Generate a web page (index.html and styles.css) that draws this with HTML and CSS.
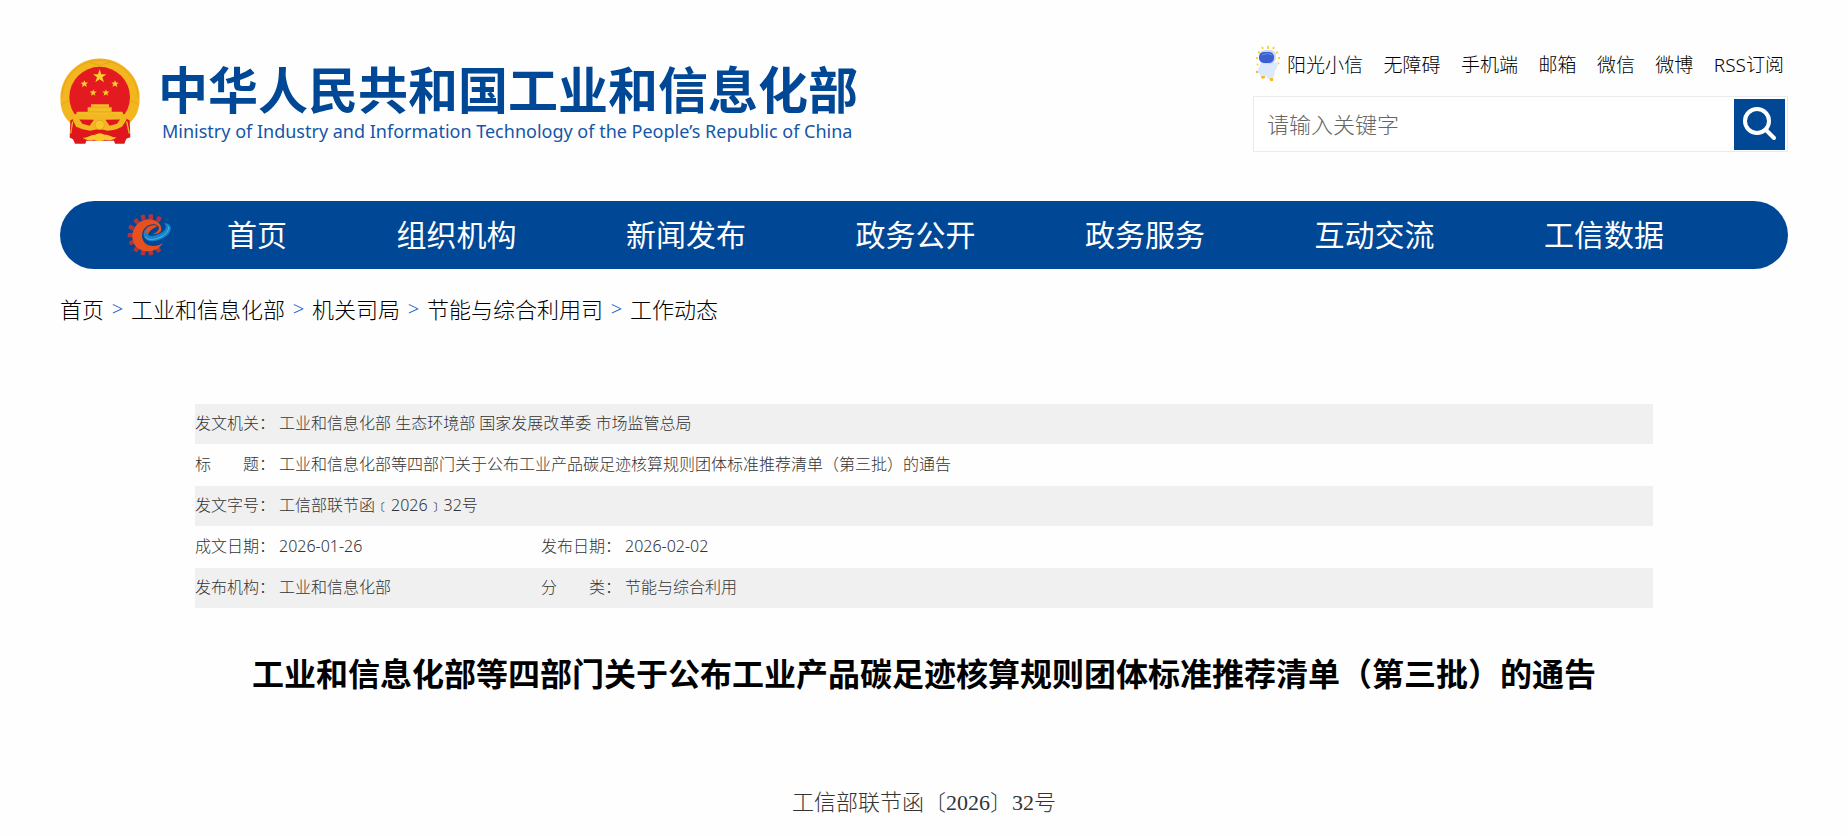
FILE: index.html
```html
<!DOCTYPE html>
<html lang="zh-CN">
<head>
<meta charset="utf-8">
<title>中华人民共和国工业和信息化部</title>
<link rel="stylesheet" href="styles.css">
</head>
<body>
<div class="page">
  <header class="header">
    <div class="brand">
      <svg class="emblem" viewBox="30 24 240 260" aria-hidden="true">
        <path d="M149 25C85 25 31 78 31 143c0 38 12 62 34 79h170c22-17 34-42 34-79C269 78 214 25 149 25z" fill="#f3b61f"/>
        <path d="M149 30C92 30 37 78 36 143M149 30c58 0 114 48 115 113M118 36l31 10 31-10M33 165l25-16M267 165l-25-16" fill="none" stroke="#e09a1c" stroke-width="2"/>
        <circle cx="149" cy="141" r="91" fill="#e31a1f"/>
        <g fill="#fbd02f">
          <path d="M149 57l5 15h15l-12 9 5 15-13-9-13 9 5-15-12-9h15z"/>
          <path d="M103 90l3 7 8 0-6 5 3 8-8-4-7 5 2-8-6-5 8-1z"/>
          <path d="M195 90l3 7 8 1-6 5 2 8-7-5-8 4 3-8-6-5 8 0z"/>
          <path d="M130 117l2 7 8 0-6 5 2 8-6-5-7 5 2-8-6-5 8 0z"/>
          <path d="M168 117l2 7 8 0-6 5 2 8-6-5-7 5 2-8-6-5 8 0z"/>
        </g>
        <path d="M123 162h54v9h8v14h32l9 22H72l9-22h32v-14h10z" fill="#f4bd27"/>
        <path d="M123 171h54M114 185h71" stroke="#e09a1c" stroke-width="2"/>
        <path d="M61 211l13-8 54 4h43l54-4 14 8 2 50-12 5-6 15h-28l-3-9-83 0-3 9H75l-6-14-10-5z" fill="#df171d"/>
        <path d="M72 192h154l4 16-14 22c-17 8-27 11-43 12-17-6-35-6-52 0-18-2-29-6-43-12l-10-22z" fill="#f2b722"/>
        <path d="M88 208l44 1-13 18-22-6zM210 208l-44 1 13 18 22-6z" fill="#df171d"/>
        <circle cx="149" cy="224" r="14" fill="#f8c72b" stroke="#e09a1c" stroke-width="2"/>
        <path d="M68 214l-6 36M230 214l8 36" fill="none" stroke="#f0b325" stroke-width="4"/>
        <path d="M98 263c17 1 24-10 37-9 10-6 19-6 29 0 14-1 20 9 36 8-13 9-25 10-35 7-11 5-22 5-33 0-10 4-22 2-34-6z" fill="#f8c92c"/>
      </svg>
      <div class="brand-text">
        <div class="brand-cn">中华人民共和国工业和信息化部</div>
        <div class="brand-en">Ministry of Industry and Information Technology of the People’s Republic of China</div>
      </div>
    </div>
    <div class="tools">
      <div class="quick-links">
        <a class="quick-link" href="#"><svg class="robot" viewBox="0 0 24 36" aria-hidden="true">
          <path d="M12 0v3M6 1l1 2M18 1l-1 2M2 6l2 1M22 6l-2 1M0 12h2M24 12h-2M1 19l1-1M23 18l-1-1" stroke="#f7d43b" stroke-width="2"/>
          <path d="M5 17h14l3-2-1 7-2 3-2 9h-4l-3-4-5 2-1-4-3-1 2-6z" fill="#dce8fb"/>
          <rect x="3" y="4" width="17" height="14" rx="6" fill="#c9d8f8"/>
          <rect x="3" y="6" width="15" height="11" rx="5" fill="#3b5fd0"/>
          <path d="M6 9q6-3 10 0" fill="none" stroke="#6f90ea"/>
          <path d="M14 32l3 0 0 3-3 0zM5 30l4 0 0 2-3 1zM0 25h2v2H0z" fill="#f5b82e"/>
        </svg>阳光小信</a>
        <a class="quick-link" href="#">无障碍</a>
        <a class="quick-link" href="#">手机端</a>
        <a class="quick-link" href="#">邮箱</a>
        <a class="quick-link" href="#">微信</a>
        <a class="quick-link" href="#">微博</a>
        <a class="quick-link" href="#">RSS订阅</a>
      </div>
      <form class="search">
        <input class="search-input" type="text" placeholder="请输入关键字" aria-label="请输入关键字">
        <button class="search-button" type="button" aria-label="搜索">
          <svg class="search-icon" viewBox="0 0 34 34" aria-hidden="true"><circle cx="14" cy="14" r="12" fill="none" stroke="#fff" stroke-width="4"/><path d="M23 23l8 8" stroke="#fff" stroke-width="4" stroke-linecap="round"/></svg>
        </button>
      </form>
    </div>
  </header>

  <nav class="nav">
    <svg class="nav-logo" viewBox="0 0 132 126" aria-hidden="true">
      <g fill="#b8323c">
        <rect x="65" y="1" width="13" height="16" rx="3"/>
        <rect x="42" y="2" width="13" height="16" rx="3" transform="rotate(-14 48 10)"/>
        <rect x="89" y="7" width="13" height="16" rx="3" transform="rotate(25 95 15)"/>
        <rect x="22" y="14" width="13" height="16" rx="3" transform="rotate(-40 28 22)"/>
        <rect x="7" y="33" width="13" height="16" rx="3" transform="rotate(-62 13 41)"/>
        <rect x="2" y="57" width="16" height="13" rx="3"/>
        <rect x="7" y="79" width="16" height="13" rx="3" transform="rotate(-20 15 85)"/>
        <rect x="22" y="97" width="13" height="16" rx="3" transform="rotate(35 28 105)"/>
        <rect x="42" y="108" width="13" height="16" rx="3" transform="rotate(12 48 116)"/>
        <rect x="65" y="108" width="13" height="16" rx="3" transform="rotate(-8 71 116)"/>
        <rect x="87" y="99" width="13" height="16" rx="3" transform="rotate(-28 93 107)"/>
      </g>
      <path d="M103 48C105 16 58 4 31 30 4 58 14 107 57 112c24 1 42-10 51-26-16 12-42 14-55 0-14-16-9-42 12-52 20-8 34 2 30 12-2 7-9 12-18 14 12 2 24-4 26-12z" fill="#e8501f"/>
      <path d="M92 36C76 28 53 40 50 58c-2 14 10 20 24 17-14-4-14-16-4-25 7-7 16-10 22-14z" fill="#e8501f"/>
      <path d="M110 27c30 1 26 28 4 42-22 15-54 18-62 0-4-10 2-19 9-23-8 14 2 22 18 19 25-4 50-22 31-38z" fill="#1684cd"/>
      <path d="M54 68c10 14 35 8 51-1 12-7 21-18 20-29" fill="none" stroke="#4fb3e4" stroke-width="3"/>
    </svg>
    <div class="nav-links">
      <a href="#">首页</a>
      <a href="#">组织机构</a>
      <a href="#">新闻发布</a>
      <a href="#">政务公开</a>
      <a href="#">政务服务</a>
      <a href="#">互动交流</a>
      <a href="#">工信数据</a>
    </div>
  </nav>

  <div class="breadcrumb">
    <a href="#">首页</a><span class="sep">&gt;</span><a href="#">工业和信息化部</a><span class="sep">&gt;</span><a href="#">机关司局</a><span class="sep">&gt;</span><a href="#">节能与综合利用司</a><span class="sep">&gt;</span><a href="#">工作动态</a>
  </div>

  <main class="article">
    <table class="meta">
      <colgroup><col class="col-label"><col class="col-value"><col class="col-label"><col></colgroup>
      <tbody>
        <tr><th scope="row">发文机关：</th><td colspan="3">工业和信息化部 生态环境部 国家发展改革委 市场监管总局</td></tr>
        <tr><th scope="row">标　　题：</th><td colspan="3">工业和信息化部等四部门关于公布工业产品碳足迹核算规则团体标准推荐清单（第三批）的通告</td></tr>
        <tr><th scope="row">发文字号：</th><td colspan="3">工信部联节函﹝2026﹞32号</td></tr>
        <tr><th scope="row">成文日期：</th><td>2026-01-26</td><th scope="row">发布日期：</th><td>2026-02-02</td></tr>
        <tr><th scope="row">发布机构：</th><td>工业和信息化部</td><th scope="row">分　　类：</th><td>节能与综合利用</td></tr>
      </tbody>
    </table>
    <h1 class="title">工业和信息化部等四部门关于公布工业产品碳足迹核算规则团体标准推荐清单（第三批）的通告</h1>
    <p class="doc-number">工信部联节函〔2026〕32号</p>
  </main>
</div>
</body>
</html>
```
FILE: styles.css
```css
* { box-sizing: border-box; }

body {
  margin: 0;
  background: #fefefe;
  color: #000;
  font-family: "Noto Sans", "Noto Sans CJK SC", sans-serif;
  font-weight: 300;
}

a { color: inherit; text-decoration: none; }

.page { padding: 44px 60px 12px; }

.header {
  display: flex;
  justify-content: space-between;
  align-items: flex-start;
}

.brand {
  display: flex;
  align-items: flex-start;
  gap: 18px;
  padding-top: 14px;
}

.emblem { width: 80px; height: 87px; }

.brand-text { color: #004796; white-space: nowrap; }

.brand-cn {
  font: bold 50px/58px "Noto Sans CJK SC", sans-serif;
}

.brand-en {
  padding: 3px 0 0 4px;
  font-size: 18px;
  font-weight: 400;
  line-height: 24px;
  color: #1456a8;
}

.tools { width: 535px; }

.quick-links {
  display: flex;
  justify-content: space-between;
  align-items: center;
  height: 40px;
  padding: 0 4px 0 3px;
  font-size: 19px;
  white-space: nowrap;
}

.quick-link { display: flex; align-items: center; gap: 7px; }

.robot { width: 24px; height: 36px; }

.search {
  display: flex;
  align-items: center;
  height: 56px;
  margin-top: 12px;
  padding-right: 2px;
  border: 1px solid #e9ecef;
  background: #fff;
}

.search-input {
  flex: 1;
  min-width: 0;
  height: 100%;
  padding: 0 13px;
  border: 0;
  background: none;
  font: inherit;
  font-size: 22px;
  color: #333;
}

.search-input::placeholder { color: #666; }

.search-button {
  display: flex;
  align-items: center;
  justify-content: center;
  width: 51px;
  height: 51px;
  padding: 0;
  border: 0;
  background: #004796;
}

.search-icon { width: 34px; height: 34px; }

.nav {
  display: flex;
  align-items: center;
  height: 68px;
  margin-top: 49px;
  padding: 0 124px 0 67px;
  border-radius: 34px;
  background: #004796;
  color: #fff;
}

.nav-logo { width: 44px; height: 42px; }

.nav-links {
  display: flex;
  flex: 1;
  justify-content: space-between;
  margin-left: 56px;
  font-size: 30px;
  font-weight: 400;
  line-height: 44px;
  white-space: nowrap;
}

.breadcrumb {
  display: flex;
  margin-top: 24px;
  font-size: 22px;
  line-height: 32px;
}

.sep { width: 27px; text-align: center; color: #1f66cc; font-size: 20px; }

.article { padding: 79px 135px 0; }

.meta {
  width: 100%;
  border-collapse: collapse;
  table-layout: fixed;
  color: #333;
  font-size: 16px;
  line-height: 24px;
}

.col-label { width: 84px; }
.col-value { width: 262px; }

.meta tr { height: 42px; }
.meta tr:nth-child(odd) { height: 40px; background: #f0f0f0; }

.meta th, .meta td {
  padding: 0 0 2px;
  font-weight: inherit;
  text-align: left;
  white-space: nowrap;
}

.title {
  margin: 42px 0 0;
  font-size: 32px;
  font-weight: bold;
  line-height: 48px;
  text-align: center;
}

.doc-number {
  margin: 89px 0 0;
  color: #333;
  font-family: "Liberation Serif", "Noto Sans CJK SC", serif;
  font-size: 22px;
  line-height: 32px;
  text-align: center;
}
```
